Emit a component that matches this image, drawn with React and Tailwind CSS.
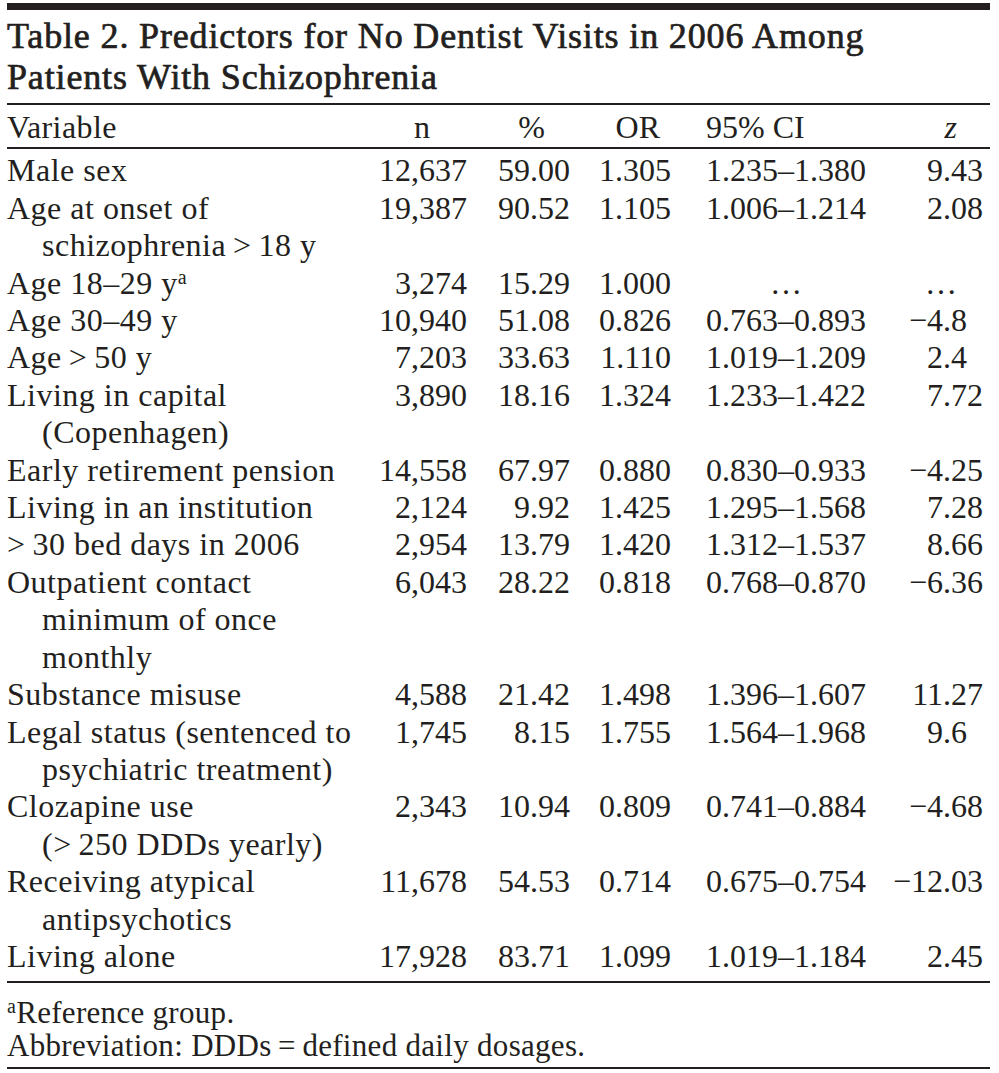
import React from 'react';

const rows = [
  { v: ['Male sex'], n: '12,637', p: '59.00', or: '1.305', ci: '1.235–1.380', z: '9.43' },
  { v: ['Age at onset of', 'schizophrenia\u2009>\u200918 y'], n: '19,387', p: '90.52', or: '1.105', ci: '1.006–1.214', z: '2.08' },
  { v: ['Age 18–29 y'], sup: true, n: '3,274', p: '15.29', or: '1.000', ci: '…', z: '…' },
  { v: ['Age 30–49 y'], n: '10,940', p: '51.08', or: '0.826', ci: '0.763–0.893', z: '−4.8\u2007' },
  { v: ['Age\u2009>\u200950 y'], n: '7,203', p: '33.63', or: '1.110', ci: '1.019–1.209', z: '2.4\u2007' },
  { v: ['Living in capital', '(Copenhagen)'], n: '3,890', p: '18.16', or: '1.324', ci: '1.233–1.422', z: '7.72' },
  { v: ['Early retirement pension'], n: '14,558', p: '67.97', or: '0.880', ci: '0.830–0.933', z: '−4.25' },
  { v: ['Living in an institution'], n: '2,124', p: '9.92', or: '1.425', ci: '1.295–1.568', z: '7.28' },
  { v: ['>\u200930 bed days in 2006'], n: '2,954', p: '13.79', or: '1.420', ci: '1.312–1.537', z: '8.66' },
  { v: ['Outpatient contact', 'minimum of once', 'monthly'], n: '6,043', p: '28.22', or: '0.818', ci: '0.768–0.870', z: '−6.36' },
  { v: ['Substance misuse'], n: '4,588', p: '21.42', or: '1.498', ci: '1.396–1.607', z: '11.27' },
  { v: ['Legal status (sentenced to', 'psychiatric treatment)'], n: '1,745', p: '8.15', or: '1.755', ci: '1.564–1.968', z: '9.6\u2007' },
  { v: ['Clozapine use', '(>\u2009250 DDDs yearly)'], n: '2,343', p: '10.94', or: '0.809', ci: '0.741–0.884', z: '−4.68' },
  { v: ['Receiving atypical', 'antipsychotics'], n: '11,678', p: '54.53', or: '0.714', ci: '0.675–0.754', z: '−12.03' },
  { v: ['Living alone'], n: '17,928', p: '83.71', or: '1.099', ci: '1.019–1.184', z: '2.45' },
];

const grid = 'grid grid-cols-[368px_92px_103px_101px_200px_112px]';

const App = () => {
  return (
    <div className="min-h-screen bg-white text-[#231f20] font-['Liberation_Serif',serif]">
      <div className="ml-[7px] w-[983px] pt-[3px]">
        {/* top bar */}
        <div className="h-[7px] bg-[#231f20]" />

        {/* Title */}
        <h1 className="pt-[6px] pb-[5px] text-[36px] leading-[41px] font-normal tracking-[0.85px] [-webkit-text-stroke:0.7px_#231f20]">
          Table 2. Predictors for No Dentist Visits in 2006 Among
          <br />
          Patients With Schizophrenia
        </h1>
        <div className="h-[2px] bg-[#231f20]" />

        {/* Header */}
        <div className={`${grid} pt-[4px] pb-[1px] text-[32px] leading-[37.4px]`}>
          <div className="tracking-[0.4px]">Variable</div>
          <div className="text-right pr-[37px]">n</div>
          <div className="text-right pr-[25px]">%</div>
          <div className="text-right pr-[11px]">OR</div>
          <div className="pl-[35px]">95% CI</div>
          <div className="text-right pr-[26px] italic">z</div>
        </div>
        <div className="h-[2px] bg-[#231f20]" />

        {/* Body */}
        <div className="pt-[3px] pb-[6px] text-[32px] leading-[37.4px]">
          {rows.map((r, i) => (
            <div key={i} className={grid}>
              <div className="pl-[35px] -indent-[35px] tracking-[0.5px]">
                {r.v.map((line, j) => (
                  <React.Fragment key={j}>
                    {j > 0 && <br />}
                    {line}
                    {r.sup && j === 0 && <sup className="text-[20px]">a</sup>}
                  </React.Fragment>
                ))}
              </div>
              <div className="text-right">{r.n}</div>
              <div className="text-right">{r.p}</div>
              <div className="text-right">{r.or}</div>
              <div>
                <span className="ml-[35px] inline-block w-[160px] text-center">{r.ci}</span>
              </div>
              <div className={r.z === '…' ? 'text-right pr-[26px]' : 'text-right'}>{r.z}</div>
            </div>
          ))}
        </div>
        <div className="h-[2px] bg-[#231f20]" />

        {/* Footnotes */}
        <div className="pt-[13px] pb-[5px] text-[31px] leading-[33px] tracking-[0.3px]">
          <p>
            <sup className="text-[20px]">a</sup>Reference group.
          </p>
          <p>Abbreviation: DDDs{'\u2009'}={'\u2009'}defined daily dosages.</p>
        </div>
        <div className="h-[2px] bg-[#231f20]" />
      </div>
    </div>
  );
};

export default App;
